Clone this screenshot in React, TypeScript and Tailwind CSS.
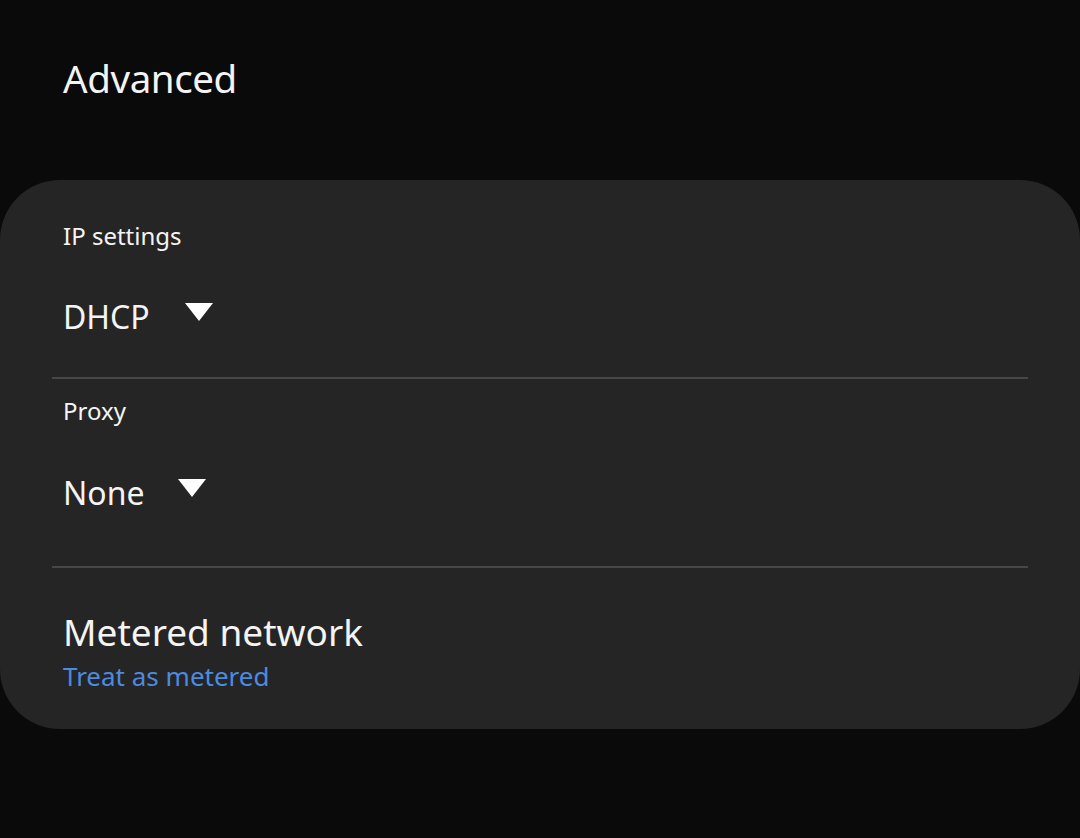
export default function App() {
  const f = { fontFamily: '"Noto Sans", "Open Sans", sans-serif' };
  return (
    <div className="w-[1080px] h-[838px] bg-[#0a0a0a] text-[#f4f4f4] overflow-hidden" style={f}>
      <div className="h-[180px] pl-[63px] pt-[50px]">
        <h1 className="text-[38.5px] leading-[56px] tracking-[-0.4px]">Advanced</h1>
      </div>
      <div className="bg-[#252525] rounded-[60px] h-[549px] flex flex-col">
        <div className="px-[52px]">
          <div className="pl-[11px] pt-[40px] h-[199px] border-b-2 border-[#474747]">
            <div className="text-[24px] leading-[32px]">IP settings</div>
            <div className="flex items-center mt-[47px] h-[36px]">
              <span className="text-[32px] leading-[36px]">DHCP</span>
              <span className="ml-[35px] -mt-[10px] w-0 h-0 border-l-[14px] border-r-[14px] border-t-[18px] border-l-transparent border-r-transparent border-t-white" />
            </div>
          </div>
          <div className="pl-[11px] pt-[16px] h-[189px] border-b-2 border-[#474747]">
            <div className="text-[24px] leading-[32px]">Proxy</div>
            <div className="flex items-center mt-[48px] h-[36px]">
              <span className="text-[32px] leading-[36px]">None</span>
              <span className="ml-[33px] -mt-[10px] w-0 h-0 border-l-[14px] border-r-[14px] border-t-[18px] border-l-transparent border-r-transparent border-t-white" />
            </div>
          </div>
          <div className="pl-[11px] pt-[42px]">
            <div className="text-[37px] leading-[44px]">Metered network</div>
            <div className="text-[26px] leading-[34px] mt-[5px] text-[#4b8be0]">Treat as metered</div>
          </div>
        </div>
      </div>
    </div>
  );
}
